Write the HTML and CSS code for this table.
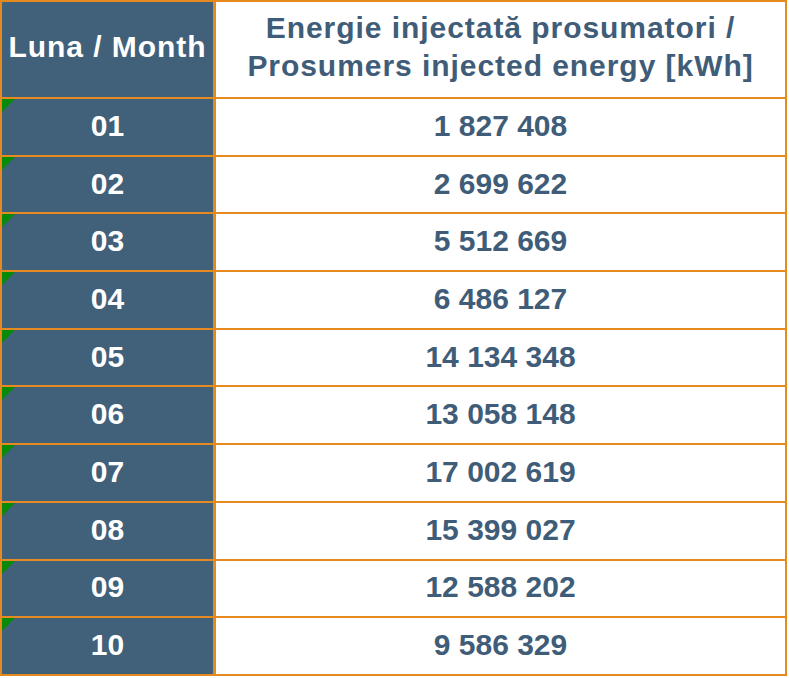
FILE: index.html
```html
<!DOCTYPE html>
<html>
<head>
<meta charset="utf-8">
<link rel="stylesheet" href="styles.css">
</head>
<body>
<div class="table">
  <div class="cell head month">Luna / Month</div>
  <div class="cell head energy">Energie injectată prosumatori /<br>Prosumers injected energy [kWh]</div>
  <div class="cell month mark">01</div><div class="cell value">1 827 408</div>
  <div class="cell month mark">02</div><div class="cell value">2 699 622</div>
  <div class="cell month mark">03</div><div class="cell value">5 512 669</div>
  <div class="cell month mark">04</div><div class="cell value">6 486 127</div>
  <div class="cell month mark">05</div><div class="cell value">14 134 348</div>
  <div class="cell month mark">06</div><div class="cell value">13 058 148</div>
  <div class="cell month mark">07</div><div class="cell value">17 002 619</div>
  <div class="cell month mark">08</div><div class="cell value">15 399 027</div>
  <div class="cell month mark">09</div><div class="cell value">12 588 202</div>
  <div class="cell month mark">10</div><div class="cell value">9 586 329</div>
</div>
</body>
</html>
```
FILE: styles.css
```css
html, body {
  margin: 0;
  padding: 0;
  background: #ffffff;
}
.table {
  width: 787px;
  box-sizing: border-box;
  display: grid;
  grid-template-columns: 211px 569px;
  grid-template-rows: 95px repeat(10, 55.7px);
  column-gap: 3px;
  row-gap: 2px;
  padding: 2px;
  background: #e6891f;
  font-family: "Liberation Sans", Arial, sans-serif;
  font-weight: bold;
  font-size: 30px;
}
.cell {
  display: flex;
  align-items: center;
  justify-content: center;
  text-align: center;
  position: relative;
  box-sizing: border-box;
  padding-bottom: 2px;
}
.head {
  letter-spacing: 0.95px;
  padding-bottom: 5px;
}
.month {
  background: #41607a;
  color: #ffffff;
}
.value, .energy {
  background: #ffffff;
  color: #3f5d78;
}
.energy {
  line-height: 38px;
}
.mark::before {
  content: "";
  position: absolute;
  left: 0;
  top: 0;
  width: 0;
  height: 0;
  border-top: 13px solid #0a8a0a;
  border-right: 13px solid transparent;
}
```
